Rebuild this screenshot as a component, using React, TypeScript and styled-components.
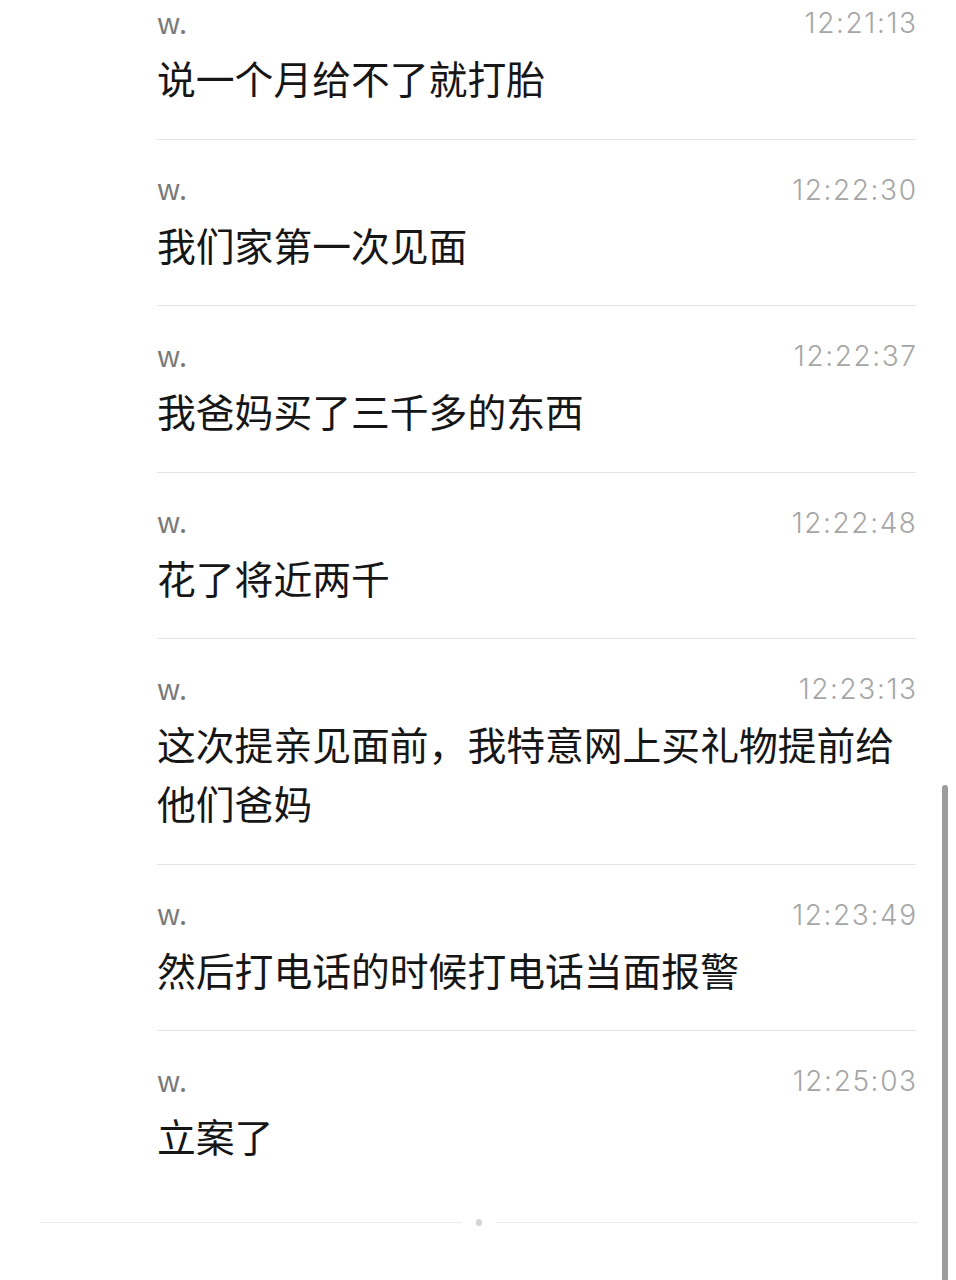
import React from "react";
import styled, { createGlobalStyle } from "styled-components";

const GlobalStyle = createGlobalStyle`
  html, body {
    margin: 0;
    padding: 0;
    background: #ffffff;
  }
  body {
    font-family: "Noto Sans CJK SC", "Noto Sans", sans-serif;
    -webkit-font-smoothing: antialiased;
  }
`;

const Page = styled.div`
  position: relative;
  width: 956px;
  height: 1280px;
  overflow: hidden;
  background: #ffffff;
`;

const List = styled.div`
  display: flex;
  flex-direction: column;
  padding: 0 40px 0 157px;
`;

const Row = styled.div<{ $first?: boolean; $last?: boolean }>`
  display: flex;
  flex-direction: column;
  gap: 7px;
  padding: ${(p) => (p.$first ? "5px" : "32px")} 0 31.5px;
  border-bottom: ${(p) => (p.$last ? "none" : "1px solid #e6e6e6")};
`;

const Header = styled.div`
  display: flex;
  align-items: center;
  justify-content: space-between;
  height: 36px;
`;

const Sender = styled.span`
  font-family: "Noto Sans CJK SC", "Noto Sans", sans-serif;
  font-size: 29px;
  color: #7a7a7a;
  margin-top: -5px;
`;

const Time = styled.span`
  font-family: Inter, "Liberation Sans", sans-serif;
  font-weight: 300;
  font-size: 28px;
  letter-spacing: 1.6px;
  margin-right: -1.6px;
  color: #a6a6a6;
`;

const Message = styled.div`
  font-family: "Noto Sans CJK SC", sans-serif;
  font-size: 38.8px;
  line-height: 59px;
  color: #161616;
`;

const Footer = styled.div`
  display: flex;
  align-items: center;
  gap: 14px;
  margin: 22px 38px 0 40px;
`;

const FooterLine = styled.div`
  flex: 1;
  height: 1px;
  background: #ececec;
`;

const FooterDot = styled.div`
  width: 6px;
  height: 7px;
  border-radius: 50%;
  background: #d4d4d4;
`;

const Scrollbar = styled.div`
  position: absolute;
  right: 8px;
  top: 785px;
  width: 6px;
  height: 520px;
  border-radius: 3px;
  background: #9c9c9c;
`;

const messages = [
  { time: "12:21:13", text: "说一个月给不了就打胎" },
  { time: "12:22:30", text: "我们家第一次见面" },
  { time: "12:22:37", text: "我爸妈买了三千多的东西" },
  { time: "12:22:48", text: "花了将近两千" },
  { time: "12:23:13", text: "这次提亲见面前，我特意网上买礼物提前给他们爸妈" },
  { time: "12:23:49", text: "然后打电话的时候打电话当面报警" },
  { time: "12:25:03", text: "立案了" },
];

export default function App() {
  return (
    <>
      <GlobalStyle />
      <Page>
        <List>
          {messages.map((m, i) => (
            <Row key={m.time} $first={i === 0} $last={i === messages.length - 1}>
              <Header>
                <Sender>w.</Sender>
                <Time>{m.time}</Time>
              </Header>
              <Message>{m.text}</Message>
            </Row>
          ))}
        </List>
        <Footer>
          <FooterLine />
          <FooterDot />
          <FooterLine />
        </Footer>
        <Scrollbar />
      </Page>
    </>
  );
}
